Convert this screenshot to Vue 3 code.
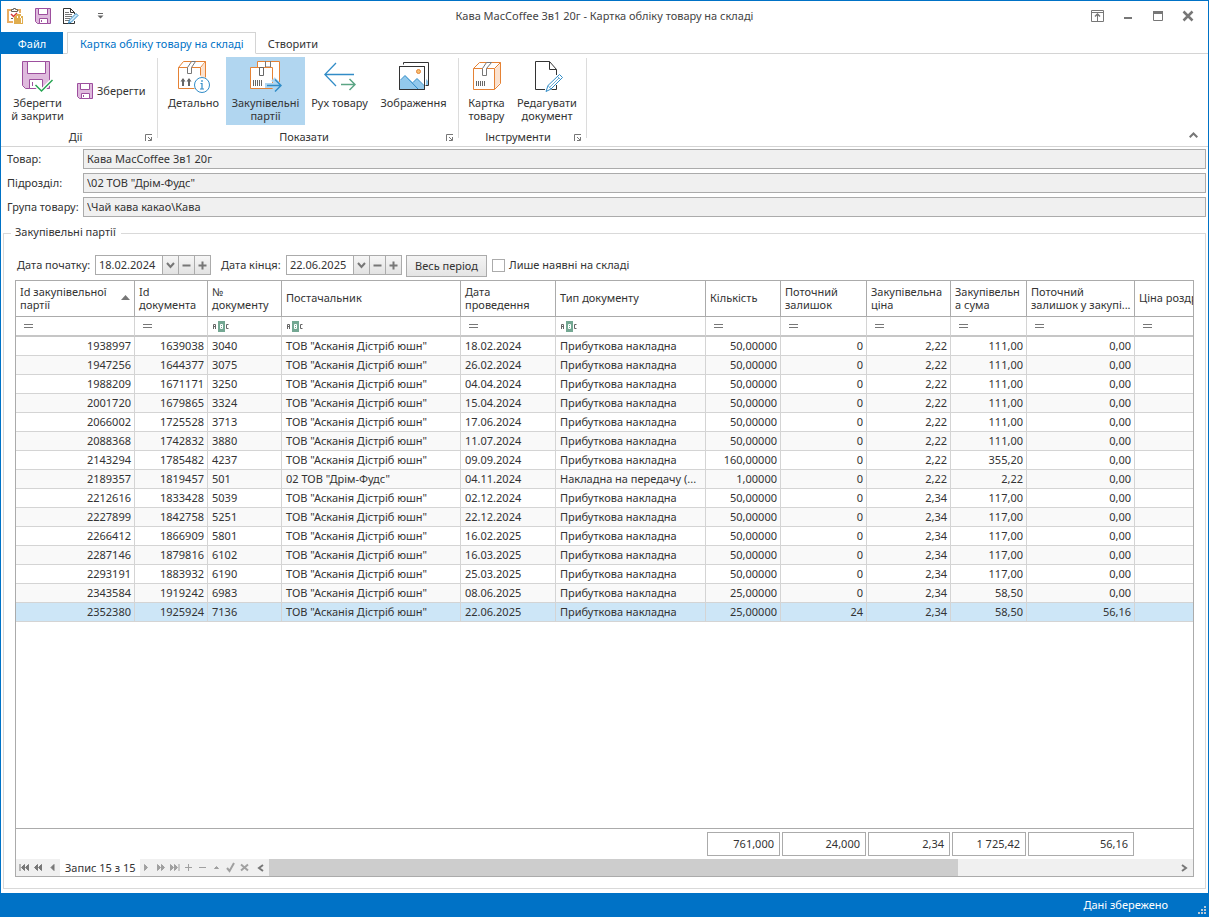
<script setup>
import { ref } from 'vue'

const fields = [
  { id: 'product', label: 'Товар:', value: 'Кава MacCoffee 3в1 20г' },
  { id: 'unit', label: 'Підрозділ:', value: '\\02 ТОВ "Дрім-Фудс"' },
  { id: 'category', label: 'Група товару:', value: '\\Чай кава какао\\Кава' },
]

const dates = ref([
  { id: 'from', label: 'Дата початку:', value: '18.02.2024' },
  { id: 'to', label: 'Дата кінця:', value: '22.06.2025' },
])

const columns = [
  { title: 'Id закупівельної партії', filter: 'eq', num: true, sorted: true },
  { title: 'Id документа', filter: 'eq', num: true },
  { title: '№ документу', filter: 'abc' },
  { title: 'Постачальник', filter: 'abc' },
  { title: 'Дата проведення', filter: 'eq' },
  { title: 'Тип документу', filter: 'abc' },
  { title: 'Кількість', filter: 'eq', num: true },
  { title: 'Поточний залишок', filter: 'eq', num: true },
  { title: 'Закупівельна ціна', filter: 'eq', num: true },
  { title: 'Закупівельна сума', filter: 'eq', num: true },
  { title: 'Поточний залишок у закупі...', filter: 'eq', num: true },
  { title: 'Ціна роздр', filter: 'eq', num: true, single: true },
]

const A = 'ТОВ "Асканія Дістріб юшн"'
const P = 'Прибуткова накладна'
const rows = [
  ['1938997', '1639038', '3040', A, '18.02.2024', P, '50,00000', '0', '2,22', '111,00', '0,00', ''],
  ['1947256', '1644377', '3075', A, '26.02.2024', P, '50,00000', '0', '2,22', '111,00', '0,00', ''],
  ['1988209', '1671171', '3250', A, '04.04.2024', P, '50,00000', '0', '2,22', '111,00', '0,00', ''],
  ['2001720', '1679865', '3324', A, '15.04.2024', P, '50,00000', '0', '2,22', '111,00', '0,00', ''],
  ['2066002', '1725528', '3713', A, '17.06.2024', P, '50,00000', '0', '2,22', '111,00', '0,00', ''],
  ['2088368', '1742832', '3880', A, '11.07.2024', P, '50,00000', '0', '2,22', '111,00', '0,00', ''],
  ['2143294', '1785482', '4237', A, '09.09.2024', P, '160,00000', '0', '2,22', '355,20', '0,00', ''],
  ['2189357', '1819457', '501', '02 ТОВ "Дрім-Фудс"', '04.11.2024', 'Накладна на передачу (...', '1,00000', '0', '2,22', '2,22', '0,00', ''],
  ['2212616', '1833428', '5039', A, '02.12.2024', P, '50,00000', '0', '2,34', '117,00', '0,00', ''],
  ['2227899', '1842758', '5251', A, '22.12.2024', P, '50,00000', '0', '2,34', '117,00', '0,00', ''],
  ['2266412', '1866909', '5801', A, '16.02.2025', P, '50,00000', '0', '2,34', '117,00', '0,00', ''],
  ['2287146', '1879816', '6102', A, '16.03.2025', P, '50,00000', '0', '2,34', '117,00', '0,00', ''],
  ['2293191', '1883932', '6190', A, '25.03.2025', P, '50,00000', '0', '2,34', '117,00', '0,00', ''],
  ['2343584', '1919242', '6983', A, '08.06.2025', P, '25,00000', '0', '2,34', '58,50', '0,00', ''],
  ['2352380', '1925924', '7136', A, '22.06.2025', P, '25,00000', '24', '2,34', '58,50', '56,16', ''],
]
const selected = ref(14)
const onlyInStock = ref(false)

const totals = ['', '', '', '', '', '', '761,000', '24,000', '2,34', '1 725,42', '56,16', '']

const navBack = [
  { name: 'Перший запис', d: 'M1 2v7M5.500 2.500v6L2.500 5.500zM9.500 2.500v6L6.500 5.500z' },
  { name: 'Попередня сторінка', d: 'M4.500 2.500v6L1.500 5.500zM8.500 2.500v6L5.500 5.500z' },
  { name: 'Попередній запис', d: 'M7 2.500v6L4 5.500z' },
]
const navForward = [
  { name: 'Наступний запис', d: 'M3.500 2.500v6l3-3z' },
  { name: 'Наступна сторінка', d: 'M2.500 2.500v6l3-3zM6.500 2.500v6l3-3z' },
  { name: 'Останній запис', d: 'M1.500 2.500v6l3-3zM5.500 2.500v6l3-3zM10 2v7' },
  { name: 'Додати', d: 'M2 5.500h7M5.500 2v7' },
  { name: 'Видалити', d: 'M2 5.500h7' },
  { name: 'Змінити', d: 'M3.500 6.500h4L5.500 4.500z' },
  { name: 'Зберегти зміни', d: 'M2 6l2.500 3L9 1', bold: true },
  { name: 'Скасувати', d: 'M2 2.500l7 6M9 2.500l-7 6', bold: true },
]
</script>

<template>
  <div class="window">
    <header class="titlebar">
      <div class="quick">
        <button class="bare" aria-label="Документ товару">
          <svg width="16" height="16" viewBox="0 0 16 16" fill="none">
            <path d="M5 2H1v12h5M10 2h3v3" stroke="#e9ad62" stroke-width="2" />
            <path d="M4.500 3.500v-2h2v-1h2v1h2v2z" fill="#fff" stroke="#6b6258" />
            <path d="M4 6l2.500 2.500L10 5" stroke="#d6393a" stroke-width="1.500" />
            <path d="M4 10.500h2" stroke="#6b6258" />
            <path d="M7 8h2V6h5v2h2v8H7z" fill="#e0ad4e" />
            <path d="M10.500 8v2M13.500 8v2M14.500 10v5" stroke="#fff" />
          </svg>
        </button>
        <button class="bare" aria-label="Зберегти">
          <svg width="16" height="16" viewBox="0 0 16 16" fill="none">
            <path d="M.5.5h15v15h-13l-2-2z" fill="#dfbadd" stroke="#9d4f9e" />
            <path d="M3.500.5h9v6h-9zM4.500 10.500h8v5h-8z" fill="#fff" stroke="#9d4f9e" />
            <path d="M6.500 12v2" stroke="#9d4f9e" />
          </svg>
        </button>
        <button class="bare" aria-label="Редагувати">
          <svg width="16" height="16" viewBox="0 0 16 16" fill="none">
            <path d="M4 15.500H.5V.5h7l4 4V6M7.500.5v4h4M0 15.500h11.500V13" stroke="#333" />
            <path d="M2 4.500h4M2 6.500h7M2 8.500h7M2 10.500h5M2 12.500h4" stroke="#777" />
            <path d="M5.500 15.200l1-3.200 6.500-6.500 2 2L8.500 14z" fill="#cfe8f8" stroke="#318cc7" />
          </svg>
        </button>
        <button class="bare customize" aria-label="Налаштувати панель">
          <svg width="7" height="6" viewBox="0 0 7 6"><path d="M1 0h5v1H1zM.5 2.500h6L3.500 5.500z" fill="#666" /></svg>
        </button>
      </div>
      <div class="caption">Кава MacCoffee 3в1 20г - Картка обліку товару на складі</div>
      <div class="controls">
        <button class="bare" aria-label="Сховати стрічку">
          <svg width="13" height="12" viewBox="0 0 13 12" fill="none" stroke="#777"><path d="M.5.5h12v11H.5zM0 2.500h13M6.500 4v8" /><path d="M4 6.500l2.500-2.500L9 6.500" stroke-width="1.500" /></svg>
        </button>
        <button class="bare" aria-label="Згорнути">
          <svg width="12" height="12" viewBox="0 0 12 12"><path d="M2 7h8v2H2z" fill="#777" /></svg>
        </button>
        <button class="bare" aria-label="Розгорнути">
          <svg width="12" height="12" viewBox="0 0 12 12" fill="none" stroke="#777"><path d="M1.500 1.500h9v9h-9z" /><path d="M1 2.500h10" stroke-width="3" /></svg>
        </button>
        <button class="bare" aria-label="Закрити">
          <svg width="12" height="12" viewBox="0 0 12 12" fill="none" stroke="#777" stroke-width="2.500"><path d="M1.500 1.500l9 9M10.500 1.500l-9 9" /></svg>
        </button>
      </div>
    </header>

    <nav class="tabs">
      <button class="tab file">Файл</button>
      <button class="tab active">Картка обліку товару на складі</button>
      <button class="tab">Створити</button>
      <span class="rest"></span>
    </nav>

    <section class="ribbon">
      <div class="group g1">
        <div class="items">
          <button class="big b1">
            <svg width="32" height="32" viewBox="0 0 32 32" fill="none">
              <path d="M.5.5h27v27h-24l-3-3z" fill="#dfbadd" stroke="#9d4f9e" />
              <path d="M5.500.5h18v12h-18z" fill="#fff" stroke="#9d4f9e" />
              <path d="M7.500 27.500v-9h13v9z" fill="#fff" stroke="#9d4f9e" /><path d="M10.500 21v4" stroke="#9d4f9e" />
              <path d="M13.500 24l6 6 11-11" stroke="#fff" stroke-width="4" />
              <path d="M13.500 24l6 6 11-11" stroke="#27a552" stroke-width="1.500" />
            </svg>
            <span>Зберегти<br />й закрити</span>
          </button>
          <button class="small">
            <svg width="16" height="16" viewBox="0 0 16 16" fill="none">
              <path d="M.5.5h15v15h-13l-2-2z" fill="#dfbadd" stroke="#9d4f9e" />
              <path d="M3.500.5h9v6h-9zM4.500 10.500h8v5h-8z" fill="#fff" stroke="#9d4f9e" />
              <path d="M6.500 12v2" stroke="#9d4f9e" />
            </svg>
            <span>Зберегти</span>
          </button>
        </div>
        <div class="gname">Дії
          <button class="bare launcher" aria-label="Параметри групи Дії"><svg width="7" height="7" viewBox="0 0 7 7" fill="none" stroke="#777"><path d="M.5 7V.5H7M3 3l3 3M6.500 3v3.500H3" /></svg></button>
        </div>
      </div>

      <div class="group g2">
        <div class="items">
          <button class="big b2">
            <svg width="32" height="32" viewBox="0 0 32 32" fill="none">
              <path d="M.5 6.500v21h16M.5 6.500h22v8M.5 6.500l5-6h22v16M22.500 6.500l5-6" stroke="#e58235" />
              <path d="M24 5.500l3-4v15h-4v-9z" fill="#fbe2cf" />
              <path d="M13.500.5l-4 6v6h4v-6l4-6z" fill="#fff" stroke="#777" />
              <path d="M5 25v-7M11 25v-7" stroke="#666" stroke-width="2" /><path d="M2.500 20.500L5 17l2.500 3.500M8.500 20.500L11 17l2.500 3.500" fill="#666" />
              <circle cx="24" cy="24" r="7.500" fill="#fff" stroke="#318cc7" />
              <path d="M24 19v2M22.500 22.500H24v5M22 28h4" stroke="#318cc7" stroke-width="1.200" />
            </svg>
            <span>Детально</span>
          </button>
          <button class="big b3 on">
            <svg width="32" height="32" viewBox="0 0 32 32" fill="none">
              <path d="M7.500.5h22v22h-22z" fill="#fff" stroke="#e58235" /><path d="M15.500 0v6h5V0" stroke="#777" />
              <path d="M.5 6.500h22v21H.5z" fill="#fff" stroke="#e58235" />
              <path d="M9.500 6.500h4v8h-4zM3.500 19v6M5.500 19v6M7.500 19v6M9.500 19v6M11.500 19v6" stroke="#666" />
              <path d="M15 24.500h14M23 18l6.500 6.500L23 31" stroke="#b1d6f0" stroke-width="5" />
              <path d="M17 24.500h14M25 18.500l6 6-6 6" stroke="#318cc7" stroke-width="1.500" />
            </svg>
            <span>Закупівельні<br />партії</span>
          </button>
          <button class="big b4">
            <svg width="32" height="32" viewBox="0 0 32 32" fill="none">
              <path d="M30 13.500H1M12 2L.8 13.500 12 25" stroke="#318cc7" stroke-width="1.300" />
              <path d="M17 23.500h14M25.500 18l5.500 5.500-5.500 5.500" stroke="#5ba584" stroke-width="1.500" />
            </svg>
            <span>Рух товару</span>
          </button>
          <button class="big b5">
            <svg width="32" height="32" viewBox="0 0 32 32" fill="none">
              <path d="M5.500 3.500v-2h25v23h-3" stroke="#333" />
              <path d="M28 18l2 2v4h-2z" fill="#92c9ec" />
              <path d="M1.500 5.500h25v23h-25z" fill="#fff" stroke="#333" />
              <path d="M2 20l5-5.500 8 7 4-4 7 7.500v3H2z" fill="#92c9ec" />
              <path d="M2 19.500l5-5L20 28M15 21.500l4-4 7.500 7.500" stroke="#318cc7" />
              <circle cx="20.500" cy="10.500" r="2" fill="#f5c073" stroke="#e58235" />
              <path d="M1.500 5.500h25v23h-25z" stroke="#333" />
            </svg>
            <span>Зображення</span>
          </button>
        </div>
        <div class="gname">Показати
          <button class="bare launcher" aria-label="Параметри групи Показати"><svg width="7" height="7" viewBox="0 0 7 7" fill="none" stroke="#777"><path d="M.5 7V.5H7M3 3l3 3M6.500 3v3.500H3" /></svg></button>
        </div>
      </div>

      <div class="group g3">
        <div class="items">
          <button class="big b6">
            <svg width="32" height="32" viewBox="0 0 32 32" fill="none">
              <path d="M2.500 7.500h21v21h-21zM2.500 7.500l6-6h21v21l-6 6M23.500 7.500l6-6" stroke="#e58235" />
              <path d="M24 8l5-5v19l-5 5z" fill="#fbe2cf" />
              <path d="M15.500 1.500l-4 6v7h4v-7l5-6z" fill="#fff" stroke="#777" />
              <path d="M5.500 20v5M7.500 20v5M9.500 20v5M11.500 20v5M13.500 20v5" stroke="#666" />
            </svg>
            <span>Картка<br />товару</span>
          </button>
          <button class="big b7">
            <svg width="32" height="32" viewBox="0 0 32 32" fill="none">
              <path d="M14 28.500H4.500V.5h14l7 8V14M18.500.5v8h7M25.500 24v4.500h-5" stroke="#333" />
              <path d="M15 30.500l2-6L28.500 13.500l3 3L20 28z" fill="#fff" stroke="#318cc7" />
              <path d="M26.500 15.500l3 3M17 24.500l3 3.500M18.500 26.500l9.500-9.500" stroke="#318cc7" stroke-width=".7" />
            </svg>
            <span>Редагувати<br />документ</span>
          </button>
        </div>
        <div class="gname">Інструменти
          <button class="bare launcher" aria-label="Параметри групи Інструменти"><svg width="7" height="7" viewBox="0 0 7 7" fill="none" stroke="#777"><path d="M.5 7V.5H7M3 3l3 3M6.500 3v3.500H3" /></svg></button>
        </div>
      </div>
      <button class="bare collapse" aria-label="Згорнути стрічку">
        <svg width="9" height="6" viewBox="0 0 9 6" fill="none" stroke="#777" stroke-width="2"><path d="M.7 5.300L4.500 1.500l3.800 3.800" /></svg>
      </button>
    </section>

    <main class="body">
      <div class="fields">
        <div v-for="f in fields" :key="f.id" class="field">
          <label :for="f.id">{{ f.label }}</label>
          <input :id="f.id" type="text" readonly :value="f.value" />
        </div>
      </div>

      <section class="box" aria-labelledby="batches">
        <h2 id="batches">Закупівельні партії</h2>
        <div class="filterbar">
          <template v-for="d in dates" :key="d.id">
            <label :for="d.id">{{ d.label }}</label>
            <div class="date">
              <input :id="d.id" v-model="d.value" type="text" />
              <button aria-label="Календар"><svg width="9" height="7" viewBox="0 0 9 7" fill="none" stroke="#777" stroke-width="2"><path d="M1 1l3.500 4L8 1" /></svg></button>
              <button aria-label="Зменшити"><svg width="9" height="9" viewBox="0 0 9 9"><path d="M.5 3.500h8v2h-8z" fill="#777" /></svg></button>
              <button aria-label="Збільшити"><svg width="9" height="9" viewBox="0 0 9 9"><path d="M.5 3.500h8v2h-8zM3.500.5h2v8h-2z" fill="#777" /></svg></button>
            </div>
          </template>
          <button class="period">Весь період</button>
          <label class="check"><input v-model="onlyInStock" type="checkbox" />Лише наявні на складі</label>
        </div>

        <div class="grid">
          <div class="viewport">
            <table>
              <colgroup><col v-for="(c, i) in columns" :key="i" :class="'c' + i" /></colgroup>
              <thead>
                <tr class="head">
                  <th v-for="(c, i) in columns" :key="i" scope="col">
                    <div class="th">
                      <span :class="{ single: c.single }">{{ c.title }}</span>
                      <svg v-if="c.sorted" width="9" height="5" viewBox="0 0 9 5"><path d="M4.500 0L9 5H0z" fill="#777" /></svg>
                    </div>
                  </th>
                </tr>
                <tr class="filters">
                  <td v-for="(c, i) in columns" :key="i">
                    <svg v-if="c.filter === 'eq'" class="eq" width="9" height="4" viewBox="0 0 9 4"><path d="M0 0h9v1H0zM0 3h9v1H0z" fill="#777" /></svg>
                    <svg v-else class="abc" width="16" height="11" viewBox="0 0 16 11" fill="none">
                      <path d="M5 0h7v11H5z" fill="#74a893" />
                      <path d="M.5 8V3.500h2V8M1 5.500h1" stroke="#666" />
                      <path d="M7.500 3.500h2v4h-2zM8 5.500h1" stroke="#fff" />
                      <path d="M15.500 3.500h-2v4h2" stroke="#666" />
                    </svg>
                  </td>
                </tr>
              </thead>
              <tbody>
                <tr v-for="(r, i) in rows" :key="r[0]" :class="{ sel: i === selected }" @click="selected = i">
                  <td v-for="(v, j) in r" :key="j" :class="{ num: columns[j].num }">{{ v }}</td>
                </tr>
              </tbody>
            </table>
          </div>
          <div class="totals">
            <div v-for="(t, i) in totals" :key="i"><output v-if="t">{{ t }}</output></div>
          </div>
          <div class="navigator">
            <div class="nav back">
              <button v-for="n in navBack" :key="n.name" :aria-label="n.name">
                <svg width="11" height="11" viewBox="0 0 11 11" fill="#777" stroke="#777" stroke-width="1"><path :d="n.d" /></svg>
              </button>
            </div>
            <div class="record">Запис 15 з 15</div>
            <div class="nav forward">
              <button v-for="n in navForward" :key="n.name" :aria-label="n.name">
                <svg width="11" height="11" viewBox="0 0 11 11" :fill="n.bold ? 'none' : '#a0a0a0'" stroke="#a0a0a0" :stroke-width="n.bold ? 2 : 1"><path :d="n.d" /></svg>
              </button>
            </div>
            <div class="scroll">
              <button aria-label="Прокрутити ліворуч"><svg width="7" height="8" viewBox="0 0 7 8" fill="none" stroke="#777" stroke-width="2"><path d="M6 1L2 4l4 3" /></svg></button>
              <div class="track"><div class="thumb"></div></div>
              <button aria-label="Прокрутити праворуч"><svg width="7" height="8" viewBox="0 0 7 8" fill="none" stroke="#777" stroke-width="2"><path d="M1 1l4 3-4 3" /></svg></button>
            </div>
          </div>
        </div>
      </section>
    </main>

    <footer class="status">
      <span>Дані збережено</span>
      <svg width="8" height="8" viewBox="0 0 8 8" fill="#b9c9d6"><path d="M6 0h2v2H6zM3 3h2v2H3zM6 3h2v2H6zM0 6h2v2H0zM3 6h2v2H3zM6 6h2v2H6z" /></svg>
    </footer>
  </div>
</template>

<style>
body { margin: 0; }
</style>

<style scoped>
* { box-sizing: border-box; }
.window {
  min-height: 100vh;
  display: flex;
  flex-direction: column;
  border: 1px solid #0072c6;
  border-bottom: 0;
  background: #fff;
  color: #333;
  font: 11px/13px "Noto Sans", "Open Sans", sans-serif;
}
button, input { font: inherit; color: inherit; margin: 0; border-radius: 0; outline: none; }
button { padding: 0; border: 0; background: none; }
svg { display: block; flex: none; }
.bare { display: flex; align-items: center; justify-content: center; }

.titlebar { height: 31px; padding-bottom: 2px; display: grid; grid-template-columns: 1fr auto 1fr; align-items: center; }
.quick { display: flex; align-items: center; gap: 12px; padding-left: 6px; }
.customize { margin-left: 6px; }
.caption { color: #444; }
.controls { display: flex; justify-content: flex-end; gap: 18px; padding-right: 14px; }

.tabs { display: flex; height: 22px; }
.tab { padding: 0 12px; border-top: 1px solid transparent; border-bottom: 1px solid #d4d4d4; }
.file { width: 62px; background: #0072c6; color: #fff; border-color: #0072c6; }
.tab.active { margin-left: 4px; padding: 0 11px 0 12px; border: 1px solid #d4d4d4; border-bottom-color: #fff; color: #0072c6; position: relative; }
.file + .active::before { content: ""; position: absolute; left: -5px; bottom: -1px; width: 4px; height: 1px; background: #d4d4d4; }
.rest { flex: 1; border-bottom: 1px solid #d4d4d4; }

.ribbon { display: flex; height: 93px; border-bottom: 1px solid #d4d4d4; position: relative; }
.group { display: flex; flex-direction: column; position: relative; padding: 3px 4px 0; }
.group::after { content: ""; position: absolute; right: 0; top: 4px; height: 80px; width: 1px; background: #dcdcdc; }
.g1 { width: 157px; }
.g2 { width: 301px; padding-left: 3px; }
.g3 { width: 128px; padding-left: 2px; }
.items { display: flex; height: 68px; }
.big { display: flex; flex-direction: column; align-items: center; padding-top: 4px; gap: 3px; text-align: center; white-space: nowrap; }
.big.on { background: #b1d6f0; }
.b1 { width: 65px; }
.b2 { width: 65px; }
.b3 { width: 79px; }
.b4 { width: 69px; }
.b5 { width: 79px; }
.b6 { width: 51px; }
.b7 { width: 70px; }
.small { display: flex; align-items: center; gap: 4px; padding: 0 4px 0 7px; }
.small span { padding-bottom: 2px; }
.gname { text-align: center; line-height: 14px; padding: 5px 8px 0 0; }
.launcher { position: absolute; right: 6px; bottom: 5px; }
.collapse { margin: auto 10px 8px auto; }

.body { flex: 1; display: flex; flex-direction: column; padding: 2px 2px 4px; }
.fields { display: flex; flex-direction: column; gap: 4px; padding-left: 4px; }
.field { display: flex; align-items: center; }
.field label { width: 76px; padding-bottom: 2px; white-space: nowrap; }
.field input { flex: 1; min-width: 0; height: 20px; padding: 0 3px 2px; border: 1px solid #ababab; background: #f0f0f0; }

.box { flex: 1; display: flex; flex-direction: column; min-width: 0; margin-top: 16px; padding: 0 11px 11px; border: 1px solid #d9d9d9; }
.box h2 { align-self: flex-start; margin: -9px 0 16px -4px; padding: 0 5px 0 4px; background: #fff; font: inherit; line-height: 14px; }
.filterbar { display: flex; align-items: flex-start; height: 25px; padding-left: 2px; line-height: 20px; white-space: nowrap; }
.filterbar > label:not(.check) { width: 78px; }
.date { display: flex; width: 116px; height: 20px; margin-right: 10px; border: 1px solid #ababab; }
.date input { flex: 1; min-width: 0; border: 0; padding: 0 3px; background: #fff; }
.date button { width: 16px; border-left: 1px solid #ababab; background: linear-gradient(#f6f6f6, #e2e2e2); display: flex; align-items: center; justify-content: center; }
.filterbar .date ~ label:not(.check) { width: 65px; }
.period { width: 81px; height: 22px; margin-left: -6px; border: 1px solid #ababab; background: linear-gradient(#f4f4f4, #e4e4e4); }
.check { display: flex; align-items: center; gap: 4px; margin-left: 5px; }
.check input { appearance: none; width: 13px; height: 13px; border: 1px solid #ababab; background: #fff; }
.check input:checked { background: #0072c6; }

.grid { flex: 1; display: flex; flex-direction: column; border: 1px solid #ababab; min-width: 0; }
.viewport { flex: 1; overflow: hidden; }
table { width: 100%; table-layout: fixed; border-collapse: separate; border-spacing: 0; }
.c0 { width: 119px; }
.c1 { width: 73px; }
.c2 { width: 74px; }
.c3 { width: 179px; }
.c4 { width: 95px; }
.c5 { width: 150px; }
.c6 { width: 75px; }
.c7 { width: 86px; }
.c8 { width: 84px; }
.c9 { width: 76px; }
.c10 { width: 108px; }
th, td { border-right: 1px solid #d4d4d4; border-bottom: 1px solid #d4d4d4; text-align: left; font-weight: normal; overflow: hidden; white-space: nowrap; }
tr > :last-child { border-right: 0; }
th { height: 36px; padding: 0 2px 2px 4px; border-color: #ababab; overflow: hidden; }
.th { display: flex; align-items: center; justify-content: space-between; white-space: normal; overflow-wrap: anywhere; }
.th span { flex: 1; min-width: 0; }
.th svg { margin-right: 2px; }
.th .single { white-space: nowrap; }
.filters td { height: 20px; padding: 0; border-bottom: 2px solid #c6c6c6; }
.eq { margin-left: 8px; }
.abc { margin-left: 5px; }
tbody td { height: 19px; padding: 0 4px 2px; }
tbody tr:nth-child(even) td { background: #f9f9f9; }
tbody td.num { text-align: right; padding-right: 3px; }
tbody tr.sel td { background: #cde6f7; }

.totals { display: grid; grid-template-columns: 119px 73px 74px 179px 95px 150px 75px 86px 84px 76px 108px 1fr; height: 31px; border-top: 1px solid #ababab; padding-top: 3px; }
.totals output { display: block; height: 24px; margin: 0 1px; padding-right: 5px; border: 1px solid #ababab; text-align: right; line-height: 22px; }
.navigator { display: flex; height: 17px; background: #f0f0f0; }
.nav { display: flex; align-items: center; }
.nav button { width: 14px; height: 17px; display: flex; align-items: center; justify-content: center; }
.back { padding: 0 1px; }
.record { background: #fff; padding: 0 4px 0 5px; line-height: 17px; white-space: nowrap; }
.scroll { flex: 1; display: flex; }
.scroll button { width: 17px; display: flex; align-items: center; justify-content: center; }
.track { flex: 1; }
.thumb { width: 76%; height: 100%; background: #cdcdcd; }

.status { height: 24px; display: flex; align-items: center; justify-content: flex-end; background: #0072c6; color: #fff; padding-right: 2px; }
.status span { margin-right: 30px; padding-bottom: 2px; }
.status svg { align-self: flex-end; margin-bottom: 3px; }
</style>
